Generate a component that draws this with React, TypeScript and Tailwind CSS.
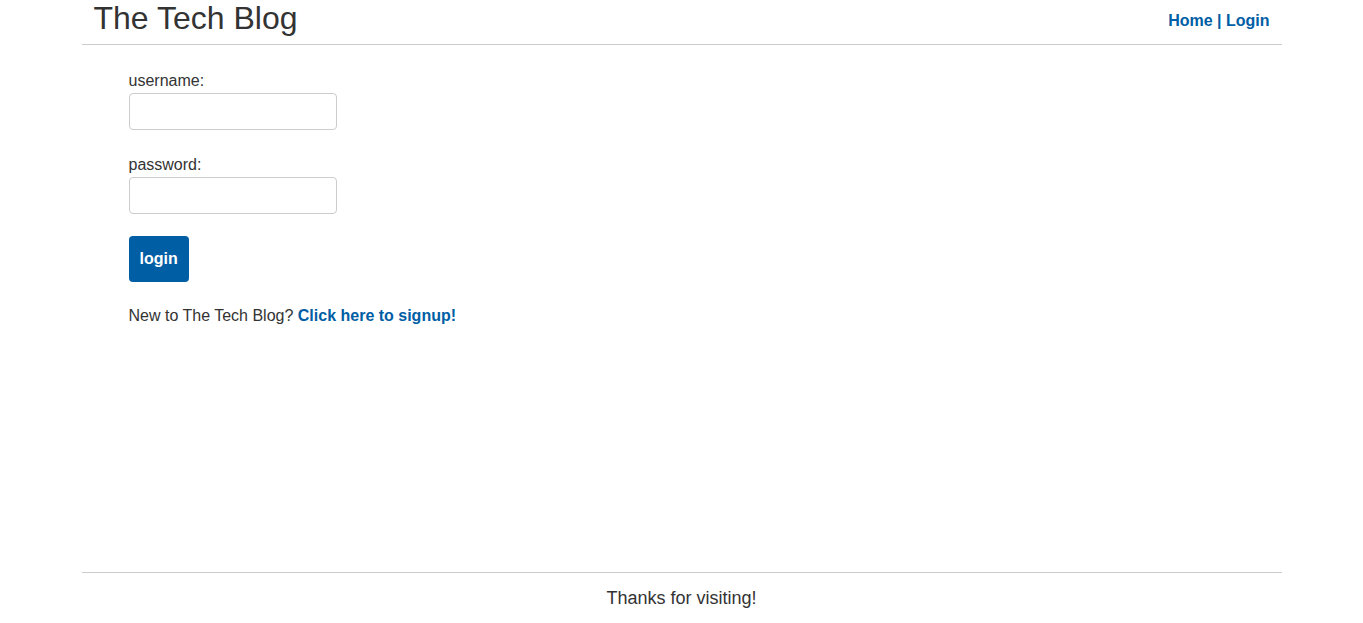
export default function App() {
  return (
    <div className="flex min-h-screen flex-col bg-white font-['Liberation_Sans',Arial,sans-serif] text-[#333]">
      <div className="mx-auto flex w-[1200px] flex-1 flex-col">
        <header className="flex h-[45px] items-start justify-between border-b border-[#ccc] px-3">
          <h1 className="text-[32px] leading-[36px] font-normal text-[#333]">The Tech Blog</h1>
          <nav className="mt-[9px] text-base leading-6 font-bold text-[#005ea5]">
            <a href="#">Home</a> | <a href="#">Login</a>
          </nav>
        </header>

        <main className="flex-1 px-[47px] pt-[24px]">
          <form className="flex flex-col items-start">
            <label className="text-base leading-6">username:</label>
            <input
              type="text"
              className="h-[37px] w-[208px] rounded border border-[#ccc] px-2"
            />
            <label className="mt-[23px] text-base leading-6">password:</label>
            <input
              type="password"
              className="h-[37px] w-[208px] rounded border border-[#ccc] px-2"
            />
            <button
              type="submit"
              className="mt-[22px] h-[46px] rounded bg-[#005ea5] px-[11px] text-base leading-6 font-bold text-white"
            >
              login
            </button>
          </form>
          <p className="mt-[22px] text-base leading-6">
            New to The Tech Blog?{" "}
            <a href="#" className="font-bold text-[#005ea5]">
              Click here to signup!
            </a>
          </p>
        </main>

        <footer className="border-t border-[#ccc] pt-[12px] pb-[11px] text-center text-[18px] leading-[27px]">
          Thanks for visiting!
        </footer>
      </div>
    </div>
  );
}
